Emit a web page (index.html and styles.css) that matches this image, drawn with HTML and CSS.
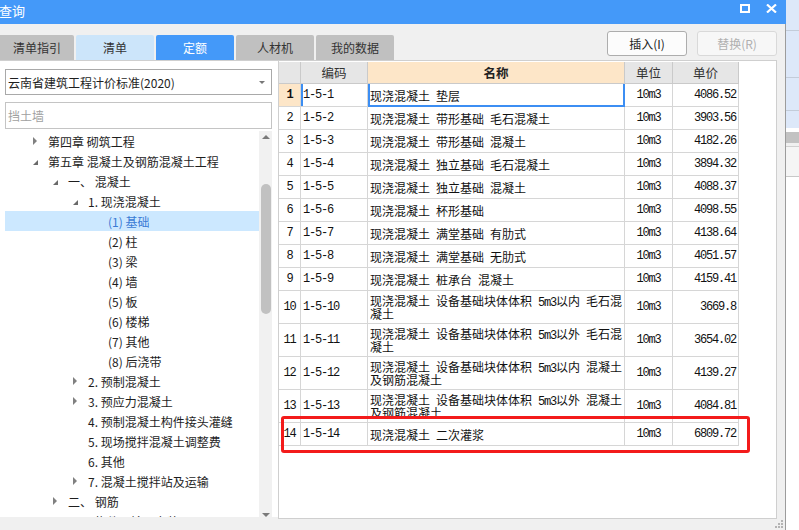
FILE: index.html
```html
<!DOCTYPE html>
<html lang="zh-CN">
<head>
<meta charset="utf-8">
<title>查询</title>
<link rel="stylesheet" href="styles.css">
</head>
<body>
<div class="screen">
  <div class="dialog">
    <div class="titlebar">
      <span class="title">查询</span>
      <div class="tb-icons">
        <span class="ico-max"></span>
        <svg class="ico-close" width="11" height="9" viewBox="0 0 11 9"><path d="M1 0.5 L10 8.5 M10 0.5 L1 8.5" stroke="#fff" stroke-width="2.2" fill="none"/></svg>
      </div>
    </div>
    <div class="dialog-body">
      <div class="toolbar">
        <div class="tabs">
          <div class="tab first">清单指引</div>
          <div class="tab light">清单</div>
          <div class="tab active">定额</div>
          <div class="tab">人材机</div>
          <div class="tab">我的数据</div>
        </div>
        <div class="btns">
          <div class="btn">插入(I)</div>
          <div class="btn disabled">替换(R)</div>
        </div>
      </div>
      <div class="main">
        <div class="left">
          <div class="select"><span>云南省建筑工程计价标准(2020)</span><span class="caret"></span></div>
          <div class="search">挡土墙</div>
          <div class="tree-wrap">
            <div class="tree">
              <div class="node l0"><span class="tw col"></span>第四章 砌筑工程</div>
              <div class="node l0"><span class="tw exp"></span>第五章 混凝土及钢筋混凝土工程</div>
              <div class="node l1"><span class="tw exp"></span>一、 混凝土</div>
              <div class="node l2"><span class="tw exp"></span>1. 现浇混凝土</div>
              <div class="node l3 sel"><span class="tw"></span>(1) 基础</div>
              <div class="node l3"><span class="tw"></span>(2) 柱</div>
              <div class="node l3"><span class="tw"></span>(3) 梁</div>
              <div class="node l3"><span class="tw"></span>(4) 墙</div>
              <div class="node l3"><span class="tw"></span>(5) 板</div>
              <div class="node l3"><span class="tw"></span>(6) 楼梯</div>
              <div class="node l3"><span class="tw"></span>(7) 其他</div>
              <div class="node l3"><span class="tw"></span>(8) 后浇带</div>
              <div class="node l2"><span class="tw col"></span>2. 预制混凝土</div>
              <div class="node l2"><span class="tw col"></span>3. 预应力混凝土</div>
              <div class="node l2"><span class="tw"></span>4. 预制混凝土构件接头灌缝</div>
              <div class="node l2"><span class="tw"></span>5. 现场搅拌混凝土调整费</div>
              <div class="node l2"><span class="tw"></span>6. 其他</div>
              <div class="node l2"><span class="tw col"></span>7. 混凝土搅拌站及运输</div>
              <div class="node l1"><span class="tw col"></span>二、 钢筋</div>
              <div class="node l1"><span class="tw col"></span>三、 构件运输及安装</div>
            </div>
            <div class="vscroll">
              <span class="arr up"></span>
              <span class="thumb"></span>
              <span class="arr down"></span>
            </div>
          </div>
        </div>
        <div class="gridpanel">
          <div class="row head">
            <div class="c hd"></div>
            <div class="c hd">编码</div>
            <div class="c hd hl">名称</div>
            <div class="c hd">单位</div>
            <div class="c hd">单价</div>
          </div>
          <div class="row">
            <div class="c rn cur">1</div>
            <div class="c code selcode">1-5-1</div>
            <div class="c name selname">现浇混凝土 垫层</div>
            <div class="c unit">10m3</div>
            <div class="c price">4086.52</div>
          </div>
          <div class="row">
            <div class="c rn">2</div><div class="c code">1-5-2</div>
            <div class="c name">现浇混凝土 带形基础 毛石混凝土</div>
            <div class="c unit">10m3</div><div class="c price">3903.56</div>
          </div>
          <div class="row">
            <div class="c rn">3</div><div class="c code">1-5-3</div>
            <div class="c name">现浇混凝土 带形基础 混凝土</div>
            <div class="c unit">10m3</div><div class="c price">4182.26</div>
          </div>
          <div class="row">
            <div class="c rn">4</div><div class="c code">1-5-4</div>
            <div class="c name">现浇混凝土 独立基础 毛石混凝土</div>
            <div class="c unit">10m3</div><div class="c price">3894.32</div>
          </div>
          <div class="row">
            <div class="c rn">5</div><div class="c code">1-5-5</div>
            <div class="c name">现浇混凝土 独立基础 混凝土</div>
            <div class="c unit">10m3</div><div class="c price">4088.37</div>
          </div>
          <div class="row">
            <div class="c rn">6</div><div class="c code">1-5-6</div>
            <div class="c name">现浇混凝土 杯形基础</div>
            <div class="c unit">10m3</div><div class="c price">4098.55</div>
          </div>
          <div class="row">
            <div class="c rn">7</div><div class="c code">1-5-7</div>
            <div class="c name">现浇混凝土 满堂基础 有肋式</div>
            <div class="c unit">10m3</div><div class="c price">4138.64</div>
          </div>
          <div class="row">
            <div class="c rn">8</div><div class="c code">1-5-8</div>
            <div class="c name">现浇混凝土 满堂基础 无肋式</div>
            <div class="c unit">10m3</div><div class="c price">4051.57</div>
          </div>
          <div class="row">
            <div class="c rn">9</div><div class="c code">1-5-9</div>
            <div class="c name">现浇混凝土 桩承台 混凝土</div>
            <div class="c unit">10m3</div><div class="c price">4159.41</div>
          </div>
          <div class="row tall">
            <div class="c rn">10</div><div class="c code">1-5-10</div>
            <div class="c name"><div class="lines"><div>现浇混凝土 设备基础块体体积 <span class="a">5m3</span>以内 毛石混</div><div>凝土</div></div></div>
            <div class="c unit">10m3</div><div class="c price">3669.8</div>
          </div>
          <div class="row tall">
            <div class="c rn">11</div><div class="c code">1-5-11</div>
            <div class="c name"><div class="lines"><div>现浇混凝土 设备基础块体体积 <span class="a">5m3</span>以外 毛石混</div><div>凝土</div></div></div>
            <div class="c unit">10m3</div><div class="c price">3654.02</div>
          </div>
          <div class="row tall">
            <div class="c rn">12</div><div class="c code">1-5-12</div>
            <div class="c name"><div class="lines"><div>现浇混凝土 设备基础块体体积 <span class="a">5m3</span>以内 混凝土</div><div>及钢筋混凝土</div></div></div>
            <div class="c unit">10m3</div><div class="c price">4139.27</div>
          </div>
          <div class="row tall">
            <div class="c rn">13</div><div class="c code">1-5-13</div>
            <div class="c name"><div class="lines"><div>现浇混凝土 设备基础块体体积 <span class="a">5m3</span>以外 混凝土</div><div>及钢筋混凝土</div></div></div>
            <div class="c unit">10m3</div><div class="c price">4084.81</div>
          </div>
          <div class="row">
            <div class="c rn">14</div><div class="c code">1-5-14</div>
            <div class="c name">现浇混凝土 二次灌浆</div>
            <div class="c unit">10m3</div><div class="c price">6809.72</div>
          </div>
        </div>
      </div>
      <div class="footer">
        <svg width="9" height="9" viewBox="0 0 9 9" fill="#b4b4b4"><rect x="7" y="1" width="2" height="2"/><rect x="4" y="4" width="2" height="2"/><rect x="7" y="4" width="2" height="2"/><rect x="1" y="7" width="2" height="2"/><rect x="4" y="7" width="2" height="2"/><rect x="7" y="7" width="2" height="2"/></svg>
      </div>
    </div>
  </div>
  <div class="bgapp">
    <div class="bg-a"></div>
    <div class="bg-a"></div>
    <div class="bg-a"></div>
    <div class="bg-a last"></div>
    <div class="bg-w"></div>
    <div class="bg-g"></div>
    <div class="bg-l"></div>
    <div class="bg-m"></div>
    <div class="bg-rest"></div>
  </div>
  <div class="annot"></div>
</div>
</body>
</html>
```

FILE: styles.css
```css
* { box-sizing: border-box; }
html, body { margin: 0; padding: 0; }
body {
  width: 799px;
  height: 530px;
  overflow: hidden;
  font-family: "Noto Sans CJK SC", "Microsoft YaHei", sans-serif;
  font-size: 12px;
  color: #222;
  background: #fff;
}
.screen { position: relative; display: flex; width: 799px; height: 530px; }

.dialog { width: 786px; height: 530px; display: flex; flex-direction: column; background: #f0f0f0; flex: none; }
.titlebar {
  height: 24px; flex: none;
  background: #4499f9; color: #fff;
  display: flex; justify-content: space-between; align-items: flex-start;
}
.title { font-size: 13px; line-height: 22px; margin-left: -1px; }
.tb-icons { display: flex; align-items: center; gap: 16px; padding-top: 4px; margin-right: 9px; }
.ico-max { display: block; width: 10px; height: 9px; border: 2px solid #fff; border-top-width: 2.5px; }
.ico-close { display: block; }

.dialog-body { flex: 1; display: flex; flex-direction: column; border-right: 1px solid #9c9c9c; }

.toolbar { height: 36px; flex: none; display: flex; justify-content: space-between; padding-right: 8px; }
.tabs { display: flex; gap: 2px; align-self: flex-end; }
.tab {
  width: 78px; height: 25px;
  display: flex; align-items: center; justify-content: center;
  background: #c0c0c0; color: #333; font-size: 12px;
  border-radius: 2px 2px 0 0;
}
.tab.first { width: 74px; border-radius: 0 2px 0 0; }
.tab.light { background: #cce5fa; }
.tab.active { background: #4499f9; color: #fff; }
.btns { display: flex; gap: 10px; padding-top: 7px; }
.btn {
  width: 80px; height: 25px;
  display: flex; align-items: center; justify-content: center;
  border: 1px solid #adadad; border-radius: 3px;
  background: #fcfcfc; color: #222; font-size: 12px;
}
.btn.disabled { border-color: #d9d9d9; color: #b0b0b0; background: #f7f7f7; }

.main { height: 459px; flex: none; display: flex; align-items: flex-start; padding-right: 8px; }

.left {
  width: 278px; height: 457px; flex: none;
  background: #fff; border-top: 1px solid #cfcfcf;
  display: flex; flex-direction: column; padding-left: 5px;
}
.select {
  margin-top: 8px; width: 267px; height: 26px;
  border: 1px solid #a9a9a9;
  display: flex; align-items: center; justify-content: space-between;
  padding: 0 6px 0 2px; font-size: 12px; color: #1e1e1e;
}
.caret { width: 0; height: 0; border-left: 3px solid transparent; border-right: 3px solid transparent; border-top: 3px solid #777; }
.search {
  margin-top: 7px; width: 267px; height: 27px;
  border: 1px solid #c4c4c4;
  display: flex; align-items: center; padding-left: 2px;
  color: #a0a0a0; font-size: 12px;
}
.tree-wrap { margin-top: 2px; width: 267px; height: 386px; display: flex; overflow: hidden; }
.tree { flex: 1; overflow: hidden; }
.node { height: 20px; display: flex; align-items: center; white-space: nowrap; color: #1e1e1e; font-size: 12px; }
.node.l0 { padding-left: 28px; }
.node.l1 { padding-left: 48px; }
.node.l2 { padding-left: 68px; }
.node.l3 { padding-left: 88px; }
.node.sel { background: #cce8ff; color: #3a7bd5; }
.tw { width: 15px; flex: none; display: flex; align-items: center; height: 20px; }
.tw.col::before {
  content: ""; display: block; width: 0; height: 0;
  border-top: 4px solid transparent; border-bottom: 4px solid transparent;
  border-left: 4px solid #808080;
}
.tw.exp::before {
  content: ""; display: block; width: 0; height: 0; margin-top: 2px;
  border-left: 5px solid transparent; border-bottom: 5px solid #6a6a6a;
}
.vscroll { width: 13px; flex: none; background: #f1f1f1; position: relative; display: flex; flex-direction: column; align-items: center; }
.arr { display: block; width: 0; height: 0; border-left: 4px solid transparent; border-right: 4px solid transparent; }
.arr.up { border-bottom: 4px solid #7a7a7a; margin-top: 4px; }
.arr.down { border-top: 4px solid #7a7a7a; margin-top: 199px; }
.thumb { display: block; width: 10px; height: 173px; border-radius: 5px; background: #c1c1c1; margin-top: 45px; }

.gridpanel {
  width: 499px; height: 459px; flex: none;
  background: #fff; border: 1px solid #cfcfcf; padding-top: 1px;
}
.row { display: grid; grid-template-columns: 22px 67px 257px 48px 66px; height: 23px; }
.row.head { height: 22px; }
.row.tall { height: 33px; }
.c {
  border-right: 1px solid #d6d6d6; border-bottom: 1px solid #d6d6d6;
  display: flex; align-items: center; overflow: hidden; white-space: nowrap;
  font-size: 12px; color: #111;
}
.c.hd { background: #e6e6e6; justify-content: center; color: #333; border-color: #cacaca; font-size: 12.5px; }
.c.hd.hl { background: #fde6c8; font-weight: bold; color: #222; }
.c.rn, .c.code, .c.unit, .c.price, .a {
  font-family: "Liberation Mono", "DejaVu Sans Mono", monospace;
  letter-spacing: -1.2px;
}
.c.rn { justify-content: center; background: #fff; }
.c.rn.cur { background: #fde6c8; font-weight: bold; }
.c.code { padding-left: 2px; }
.c.name { padding-left: 2px; word-spacing: 3.3px; }
.lines { display: flex; flex-direction: column; gap: 0; }
.lines > div { height: 13px; line-height: 13px; }
.a { font-size: 12px; word-spacing: 0; }
.c.unit { justify-content: center; }
.c.price { justify-content: flex-end; padding-right: 2px; }
.selcode { box-shadow: inset 2px 0 0 #3c8ef3; }
.selname { box-shadow: inset 2px 0 0 #3c8ef3, inset -1px 0 0 #3c8ef3, inset 0 -1px 0 #3c8ef3; border-right-color: #3c8ef3; border-bottom-color: #3c8ef3; }

.footer { flex: 1; display: flex; justify-content: flex-end; align-items: flex-start; padding-right: 2px; }

.bgapp { flex: 1; display: flex; flex-direction: column; }
.bg-a { height: 31px; background: #dde8f9; border-bottom: 1px solid #c3ccd9; flex: none; }
.bg-a:nth-child(2) { height: 47px; }
.bg-a:nth-child(3) { height: 33px; }
.bg-a.last { height: 17px; border-bottom: none; }
.bg-w { height: 4px; background: #fff; flex: none; }
.bg-g { height: 11px; background: #c2c2c2; flex: none; }
.bg-l { height: 4px; background: #f0f0f0; border-bottom: 1px solid #d0d0d0; flex: none; }
.bg-m { height: 30px; background: #f5f5f5; border-bottom: 1px solid #c8c8c8; flex: none; }
.bg-rest { flex: 1; background: #fff; }

.annot {
  position: absolute; left: 281px; top: 416px;
  width: 469px; height: 37px;
  border: 3px solid #f31b1b; border-radius: 3px;
}
```
